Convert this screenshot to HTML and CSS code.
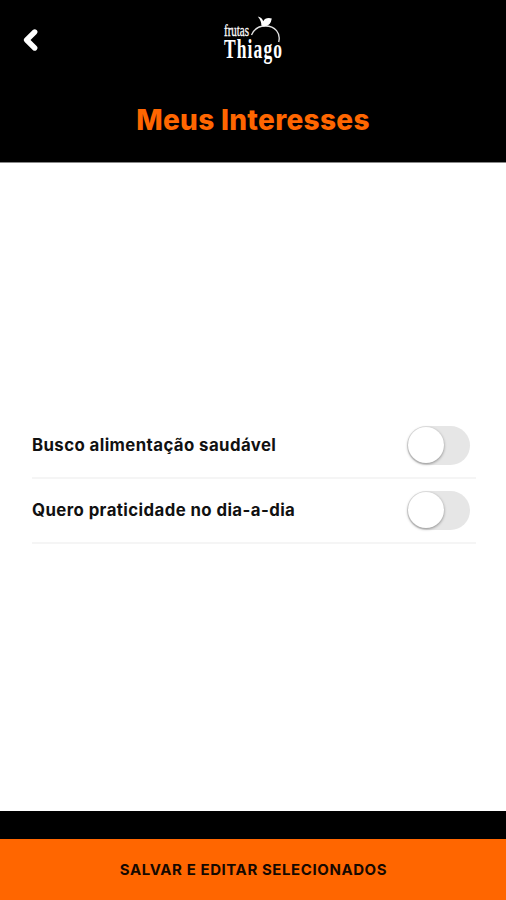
FILE: index.html
```html
<!DOCTYPE html>
<html lang="pt-BR">
<head>
<meta charset="utf-8">
<title>Meus Interesses</title>
<link rel="stylesheet" href="styles.css">
</head>
<body>
<div class="screen">
  <header class="header">
    <div class="topbar">
      <svg class="back" viewBox="0 0 20 26" aria-label="Voltar"><path d="M14.7 5 6.6 13l8.1 8"/></svg>
      <svg class="logo" viewBox="0 0 90 64" aria-label="frutas Thiago">
        <text class="logo-small" x="14" y="27.5" textLength="25" lengthAdjust="spacingAndGlyphs">frutas</text>
        <text class="logo-big" x="14" y="50" textLength="58" lengthAdjust="spacing">Thiago</text>
        <path class="fruit" d="M41.5 27C44 21 49 18 55.5 18 65 18 71 25 68.7 34"/>
        <path class="leaf" d="M47.8 8.5Q52.4 9.7 53.2 13.3Q55.5 9 61.8 10.5Q60.5 18.9 53.4 18.2L51.4 17.4Q51.5 13 47.8 8.5Z"/>
      </svg>
    </div>
    <h1 class="title">Meus Interesses</h1>
  </header>
  <main class="content">
    <label class="row"><span class="label">Busco alimentação saudável</span><span class="toggle"><span class="knob"></span></span></label>
    <label class="row"><span class="label">Quero praticidade no dia-a-dia</span><span class="toggle"><span class="knob"></span></span></label>
  </main>
  <footer class="footer"><button class="save">SALVAR E EDITAR SELECIONADOS</button></footer>
</div>
</body>
</html>
```
FILE: styles.css
```css
* { box-sizing: border-box; }
body { margin: 0; background: #fff; font-family: Inter, "Liberation Sans", sans-serif; }
.screen { height: 900px; display: flex; flex-direction: column; }
.header { height: 163px; background: #000; border-bottom: 1px solid #888; }
.topbar { height: 80px; display: grid; grid-template-columns: 210px 90px 1fr; align-items: center; }
.back { width: 20px; height: 26px; margin-left: 20px; fill: none; stroke: #fff; stroke-width: 5.4; stroke-linecap: round; stroke-linejoin: round; }
.logo { width: 90px; height: 64px; fill: #fff; overflow: visible; }
.logo-small { font-family: "Liberation Serif", serif; font-size: 16px; stroke: #fff; stroke-width: .3px; }
.logo-big { font-family: "Liberation Serif", serif; font-size: 17.5px; font-weight: 700; transform: scaleY(1.6); transform-origin: 0 50px; }
.fruit { fill: none; stroke: #e4e4e4; stroke-width: 1.3; }
.title { margin: 20px 0 0; font-size: 28px; line-height: 40px; font-weight: 800; letter-spacing: .3px; text-align: center; color: #ff6600; }
.content { flex: 1; padding: 0 30px 17px 32px; display: flex; flex-direction: column; justify-content: center; }
.row { height: 65px; display: flex; align-items: center; justify-content: space-between; border-bottom: 2px solid #f5f5f5; padding-right: 6px; }
.label { font-size: 16.8px; font-weight: 700; letter-spacing: .41px; color: #111; white-space: nowrap; }
.toggle { width: 63px; height: 39px; border-radius: 20px; background: #e6e6e6; padding: 1px; }
.knob { display: block; width: 36px; height: 36px; border-radius: 50%; background: #fff; box-shadow: 0 1px 3px rgba(0,0,0,.4); }
.footer { height: 89px; padding-top: 28px; background: #000; }
.save { display: block; width: 100%; height: 61px; border: 0; padding: 0 0 0 1px; background: #ff6600; color: #160900; font: 700 15px/61px Inter, "Liberation Sans", sans-serif; letter-spacing: .58px; }
```
